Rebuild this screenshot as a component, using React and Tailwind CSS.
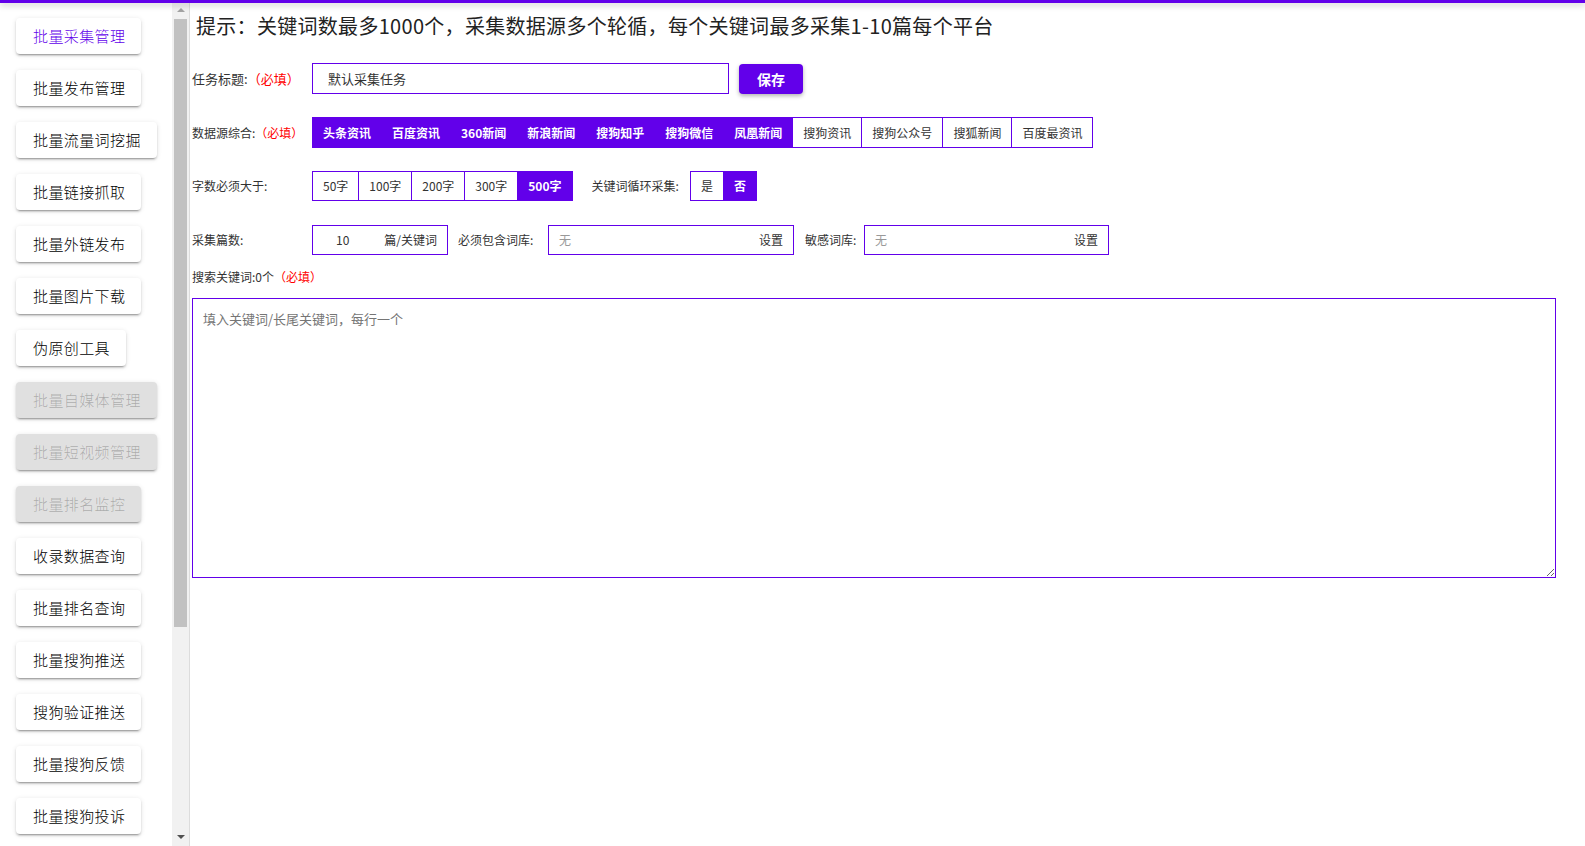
import { useState } from "react";

const menu = [
  { name: "批量采集管理", active: true },
  { name: "批量发布管理" },
  { name: "批量流量词挖掘" },
  { name: "批量链接抓取" },
  { name: "批量外链发布" },
  { name: "批量图片下载" },
  { name: "伪原创工具" },
  { name: "批量自媒体管理", disabled: true },
  { name: "批量短视频管理", disabled: true },
  { name: "批量排名监控", disabled: true },
  { name: "收录数据查询" },
  { name: "批量排名查询" },
  { name: "批量搜狗推送" },
  { name: "搜狗验证推送" },
  { name: "批量搜狗反馈" },
  { name: "批量搜狗投诉" },
];

const sources = [
  "头条资讯",
  "百度资讯",
  "360新闻",
  "新浪新闻",
  "搜狗知乎",
  "搜狗微信",
  "凤凰新闻",
  "搜狗资讯",
  "搜狗公众号",
  "搜狐新闻",
  "百度最资讯",
];

const lengths = ["50字", "100字", "200字", "300字", "500字"];

const font = { fontFamily: '"Noto Sans CJK SC", "Liberation Sans", sans-serif' };

const shadow =
  "shadow-[0px_3px_1px_-2px_rgba(0,0,0,0.2),0px_2px_2px_0px_rgba(0,0,0,0.14),0px_1px_5px_0px_rgba(0,0,0,0.12)]";

const Sidebar = () => (
  <div className="flex w-[172px] shrink-0 flex-col items-start gap-4 pl-4 pt-[18px]">
    {menu.map((item) => (
      <button
        key={item.name}
        className={`flex h-9 items-center rounded pl-[17px] pr-4 text-[15px] font-light tracking-[0.4px] ${shadow} ${
          item.disabled
            ? "bg-[#e0e0e0] text-black/25"
            : item.active
            ? "bg-white text-[#6200ea]"
            : "bg-white text-black"
        }`}
      >
        {item.name}
      </button>
    ))}
  </div>
);

const Scrollbar = () => (
  <div className="relative flex w-[18px] shrink-0 flex-col items-start border-r border-[#dcdcdc] bg-[#f1f1f1]">
    <div className="flex h-[19px] w-[17px] items-center justify-center">
      <div className="h-0 w-0 border-x-[4px] border-b-[4px] border-x-transparent border-b-[#a3a3a3]" />
    </div>
    <div className="ml-[2px] h-[608px] w-[13px] bg-[#c1c1c1]" />
    <div className="flex-1" />
    <div className="flex h-[19px] w-[17px] items-center justify-center">
      <div className="h-0 w-0 border-x-[4px] border-t-[4px] border-x-transparent border-t-[#505050]" />
    </div>
  </div>
);

const Toggle = ({ items, selected, onSelect }) => (
  <div className="flex h-full border border-[#6200ea]">
    {items.map((it, i) => {
      const on = selected.includes(it);
      return (
        <button
          key={it}
          onClick={() => onSelect(it)}
          className={`flex h-full items-center px-[10px] text-xs ${
            i > 0 ? "border-l border-[#6200ea]" : ""
          } ${on ? "bg-[#6200ea] font-bold text-white" : "bg-white text-[#333]"}`}
        >
          {it}
        </button>
      );
    })}
  </div>
);

const Label = ({ children, required }) => (
  <div className="w-[120px] shrink-0 text-xs text-[#333]">
    {children}
    {required && <span className="text-[#ff0000]">（必填）</span>}
  </div>
);

const App = () => {
  const [picked, setPicked] = useState(sources.slice(0, 7));
  const [len, setLen] = useState("500字");
  const [loop, setLoop] = useState("否");

  const toggleSource = (s) =>
    setPicked((p) => (p.includes(s) ? p.filter((x) => x !== s) : [...p, s]));

  return (
    <div className="relative flex h-[846px] w-full overflow-hidden bg-white" style={font}>
      <div className="absolute inset-x-0 top-0 z-10 h-[3px] bg-[#6200ea] shadow-[0_2px_6px_rgba(0,0,0,0.25)]" />
      <Sidebar />
      <Scrollbar />

      <div className="flex flex-1 flex-col pl-[2px] pr-[29px]">
        <div className="mt-[13px] pl-1 text-[20px] leading-[26px] tracking-[0.3px] text-[#222]">
          提示：关键词数最多1000个，采集数据源多个轮循，每个关键词最多采集1-10篇每个平台
        </div>

        <div className="mt-[24px] flex h-[31px] items-center">
          <div className="w-[120px] shrink-0 text-[13px] text-[#333]">
            任务标题:<span className="text-[#ff0000]">（必填）</span>
          </div>
          <input
            defaultValue="默认采集任务"
            className="h-full w-[417px] border border-[#6200ea] px-[15px] text-[13px] text-[#333] outline-none"
          />
          <button className="ml-[10px] h-[30px] w-[64px] rounded bg-[#6200ea] text-sm font-bold text-white shadow-[0_2px_4px_rgba(0,0,0,0.3)]">
            保存
          </button>
        </div>

        <div className="mt-[23px] flex h-[31px] items-center">
          <Label required>数据源综合:</Label>
          <Toggle items={sources} selected={picked} onSelect={toggleSource} />
        </div>

        <div className="mt-[23px] flex h-[30px] items-center">
          <Label>字数必须大于:</Label>
          <Toggle items={lengths} selected={[len]} onSelect={setLen} />
          <div className="ml-[19px] mr-[11px] text-xs text-[#333]">关键词循环采集:</div>
          <Toggle items={["是", "否"]} selected={[loop]} onSelect={setLoop} />
        </div>

        <div className="mt-[24px] flex h-[30px] items-center">
          <Label>采集篇数:</Label>
          <div className="flex h-full w-[136px] items-center border border-[#6200ea] pl-[23px] pr-[10px] text-xs text-[#333]">
            <span>10</span>
            <span className="ml-auto">篇/关键词</span>
          </div>
          <div className="ml-[10px] w-[90px] text-xs text-[#333]">必须包含词库:</div>
          <div className="flex h-full w-[246px] items-center border border-[#6200ea] pl-[10px] pr-[10px] text-xs">
            <span className="text-[#999]">无</span>
            <span className="ml-auto text-[#333]">设置</span>
          </div>
          <div className="ml-[11px] w-[59px] text-xs text-[#333]">敏感词库:</div>
          <div className="flex h-full w-[245px] items-center border border-[#6200ea] pl-[10px] pr-[10px] text-xs">
            <span className="text-[#999]">无</span>
            <span className="ml-auto text-[#333]">设置</span>
          </div>
        </div>

        <div className="mt-[14px] text-xs text-[#333]">
          搜索关键词:0个<span className="text-[#ff0000]">（必填）</span>
        </div>

        <textarea
          placeholder="填入关键词/长尾关键词，每行一个"
          className="mt-[13px] h-[280px] w-full border border-[#6200ea] px-[10px] py-[10px] text-[13px] text-[#333] outline-none placeholder:text-[#757575]"
        />
      </div>
    </div>
  );
};

export default App;
